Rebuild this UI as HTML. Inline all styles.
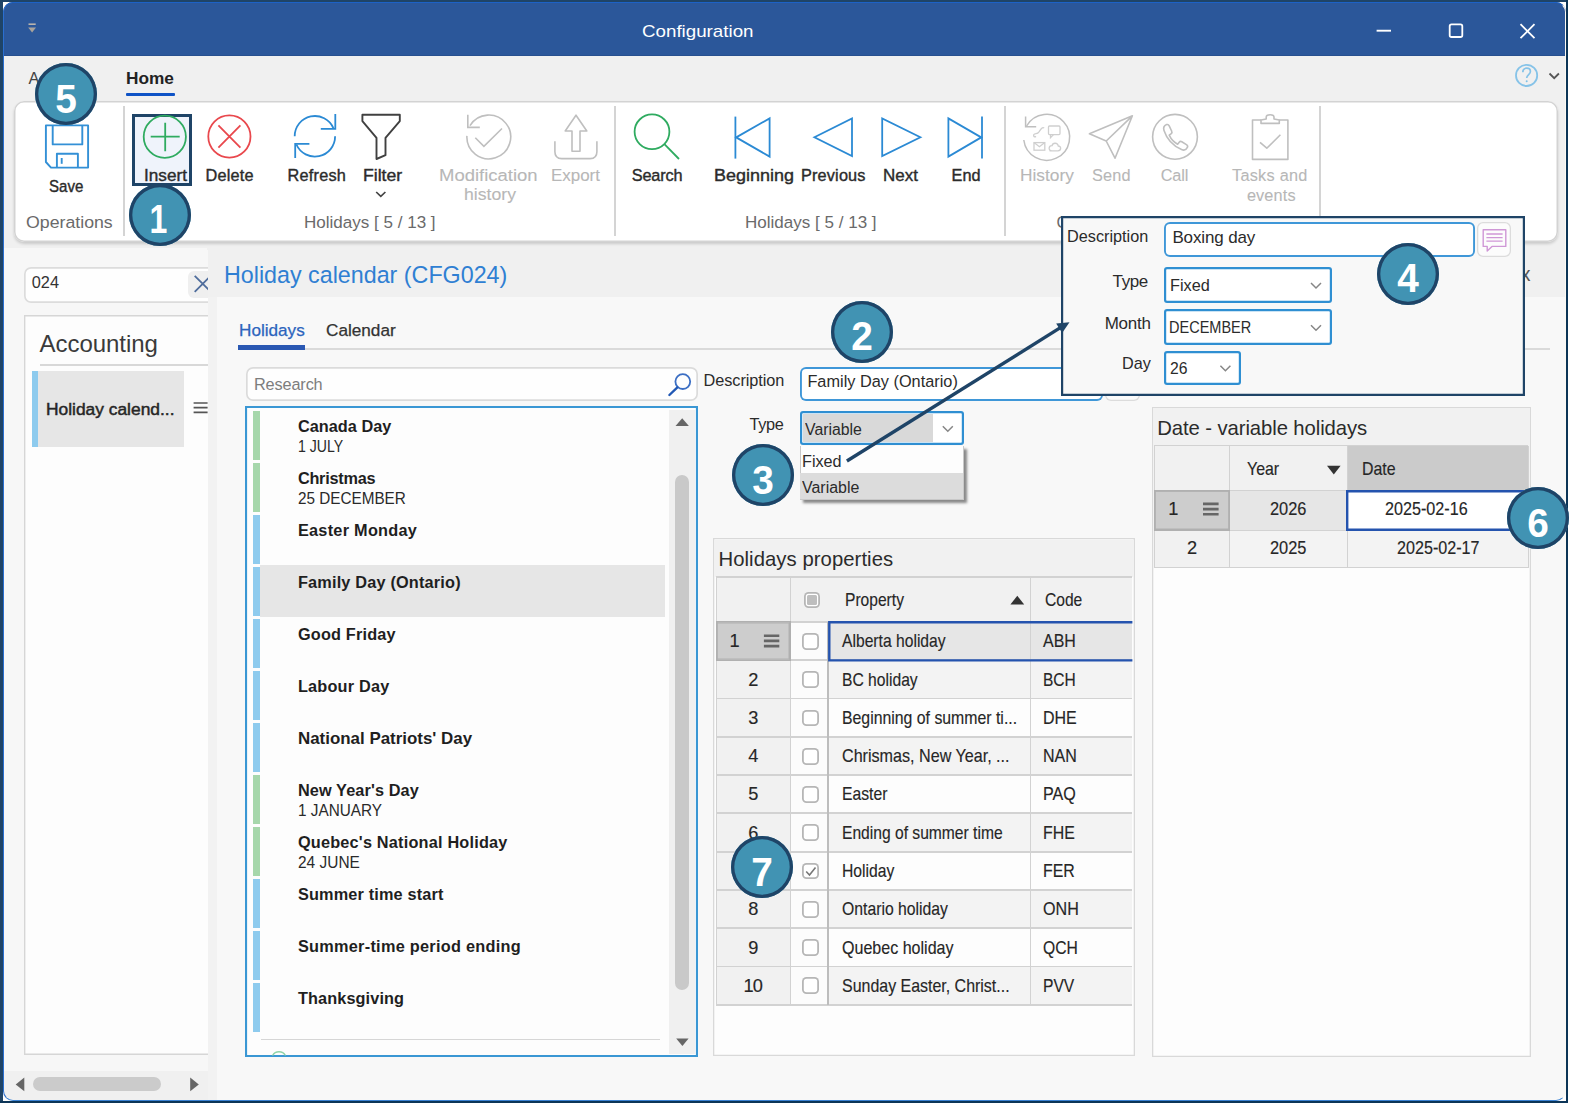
<!DOCTYPE html>
<html lang="en"><head><meta charset="utf-8"><title>Configuration</title>
<style>
html,body{margin:0;padding:0;background:#fff;}
body{width:1570px;height:1104px;overflow:hidden;position:relative;font-family:"Liberation Sans",sans-serif;}
#w{position:absolute;left:0;top:0;width:1570px;height:1104px;overflow:hidden;}
#w div,#w svg,#w span.t{position:absolute;box-sizing:border-box;}
span.t{white-space:nowrap;display:block;transform-origin:0 0;}
.badge{border-radius:50%;background:#4193b3;box-shadow:inset 0 0 0 3.3px #1f4467;}
.badge span{position:absolute;left:0;right:0;top:8.9px;height:55.4px;text-align:center;color:#fff;font-weight:700;font-size:40px;line-height:55.4px;transform:scaleX(0.93);}
</style></head><body><div id="w">
<div style="left:0.00px;top:0.00px;width:1568.30px;height:1103.30px;background:#1f4467;"></div>
<div style="left:1565.80px;top:0.00px;width:2.50px;height:1103.30px;background:#0c3557;"></div>
<div style="left:0.00px;top:1100.80px;width:1568.30px;height:2.50px;background:#0c3557;"></div>
<div style="left:2.80px;top:1.80px;width:1563.00px;height:1099.00px;background:#fff;"></div>
<div style="left:2.80px;top:1.80px;width:1563.00px;height:1099.00px;background:#f7f7f7;border-radius:10px;"></div>
<div style="left:2.80px;top:1.80px;width:1563.00px;height:53.70px;background:#2b579a;border-radius:10px 10px 0 0;"></div>
<div style="left:2.80px;top:54.50px;width:1563.00px;height:1.30px;background:#27508f;"></div>
<div style="left:2.80px;top:55.80px;width:1563.00px;height:194.20px;background:#f0f0f0;"></div>
<span class="t " style="left:642.00px;top:20.51px;font-size:17px;line-height:22px;color:#fff;transform:scaleX(1.1029);">Configuration</span>
<svg style="left:26px;top:20px;" width="12" height="16" viewBox="26 20 12 16" fill="none"><path d="M28.5 24.2h7.2" stroke="#b9b4ae" stroke-width="1.6"/><path d="M28.2 27.6h7.8l-3.9 5z" fill="#a9a39b"/></svg>
<svg style="left:1370px;top:18px;" width="175" height="26" viewBox="1370 18 175 26" fill="none"><path d="M1376.6 30.7h14.4" stroke="#fff" stroke-width="1.9"/><rect x="1449.7" y="24.4" width="12.6" height="12.6" rx="1.8" stroke="#fff" stroke-width="1.8"/><path d="M1520.5 24.2l14 14M1534.5 24.2l-14 14" stroke="#fff" stroke-width="1.8"/></svg>
<svg style="left:1512px;top:62px;" width="52" height="28" viewBox="1512 62 52 28" fill="none"><circle cx="1526.6" cy="75.4" r="10.6" stroke="#86c3e8" stroke-width="1.8"/><path d="M1522.8 72.2c0-2.6 1.6-4 3.9-4 2.2 0 3.7 1.4 3.7 3.3 0 3-3.7 3.2-3.7 6.6" stroke="#86c3e8" stroke-width="1.7"/><circle cx="1526.7" cy="81.3" r="1" fill="#7fc0e6"/><path d="M1549.5 73.5l4.7 4.7 4.7-4.7" stroke="#555" stroke-width="1.8"/></svg>
<span class="t " style="left:28.50px;top:67.85px;font-size:16.3px;line-height:21px;color:#444;">A</span>
<span class="t " style="left:126.00px;top:67.85px;font-size:16.3px;line-height:21px;color:#222;font-weight:700;transform:scaleX(1.0596);">Home</span>
<div style="left:126.00px;top:93.00px;width:49.30px;height:3.20px;background:#0f53c6;border-radius:1px;"></div>
<div style="left:13.50px;top:100.80px;width:1544.00px;height:141.50px;background:#fff;border-radius:10px;box-shadow:inset 0 0 0 1.5px #d3d3d3,0 2px 3px rgba(0,0,0,0.16);"></div>
<div style="left:123.30px;top:105.80px;width:1.40px;height:130.00px;background:#d4d4d4;"></div>
<div style="left:614.30px;top:105.80px;width:1.40px;height:130.00px;background:#d4d4d4;"></div>
<div style="left:1004.30px;top:105.80px;width:1.40px;height:130.00px;background:#d4d4d4;"></div>
<div style="left:1319.30px;top:105.80px;width:1.40px;height:130.00px;background:#d4d4d4;"></div>
<div class="badge" style="left:128.70px;top:183.60px;width:62.00px;height:62.00px;"><span style="transform:translateX(-1.5px) scaleX(0.8);">1</span></div>
<div style="left:132.20px;top:114.20px;width:59.60px;height:72.20px;background:#eff3fb;border:3px solid #1f4467;"></div>
<span class="t " style="left:48.90px;top:175.85px;font-size:16.3px;line-height:21px;color:#2b2b2b;transform:scaleX(0.9247);-webkit-text-stroke:0.38px #2b2b2b;">Save</span>
<span class="t " style="left:143.80px;top:164.85px;font-size:16.3px;line-height:21px;color:#2b2b2b;transform:scaleX(1.0539);-webkit-text-stroke:0.38px #2b2b2b;">Insert</span>
<span class="t " style="left:205.40px;top:164.85px;font-size:16.3px;line-height:21px;color:#2b2b2b;letter-spacing:0.240px;-webkit-text-stroke:0.38px #2b2b2b;">Delete</span>
<span class="t " style="left:287.50px;top:164.85px;font-size:16.3px;line-height:21px;color:#2b2b2b;letter-spacing:0.233px;-webkit-text-stroke:0.38px #2b2b2b;">Refresh</span>
<span class="t " style="left:362.50px;top:164.85px;font-size:16.3px;line-height:21px;color:#2b2b2b;transform:scaleX(1.0829);-webkit-text-stroke:0.38px #2b2b2b;">Filter</span>
<span class="t " style="left:439.30px;top:164.85px;font-size:16.3px;line-height:21px;color:#b7b7b7;transform:scaleX(1.1345);-webkit-text-stroke:0.1px #b7b7b7;">Modification</span>
<span class="t " style="left:463.60px;top:184.35px;font-size:16.3px;line-height:21px;color:#b7b7b7;transform:scaleX(1.0832);-webkit-text-stroke:0.1px #b7b7b7;">history</span>
<span class="t " style="left:550.80px;top:164.85px;font-size:16.3px;line-height:21px;color:#b7b7b7;transform:scaleX(1.0403);-webkit-text-stroke:0.1px #b7b7b7;">Export</span>
<span class="t " style="left:631.70px;top:164.85px;font-size:16.3px;line-height:21px;color:#2b2b2b;letter-spacing:-0.140px;-webkit-text-stroke:0.38px #2b2b2b;">Search</span>
<span class="t " style="left:714.00px;top:164.85px;font-size:16.3px;line-height:21px;color:#2b2b2b;transform:scaleX(1.1034);-webkit-text-stroke:0.38px #2b2b2b;">Beginning</span>
<span class="t " style="left:801.00px;top:164.85px;font-size:16.3px;line-height:21px;color:#2b2b2b;letter-spacing:0.157px;-webkit-text-stroke:0.38px #2b2b2b;">Previous</span>
<span class="t " style="left:883.40px;top:164.85px;font-size:16.3px;line-height:21px;color:#2b2b2b;transform:scaleX(1.0418);-webkit-text-stroke:0.38px #2b2b2b;">Next</span>
<span class="t " style="left:951.40px;top:164.85px;font-size:16.3px;line-height:21px;color:#2b2b2b;letter-spacing:0.150px;-webkit-text-stroke:0.38px #2b2b2b;">End</span>
<span class="t " style="left:1020.00px;top:164.85px;font-size:16.3px;line-height:21px;color:#b7b7b7;transform:scaleX(1.0630);-webkit-text-stroke:0.1px #b7b7b7;">History</span>
<span class="t " style="left:1092.00px;top:164.85px;font-size:16.3px;line-height:21px;color:#b7b7b7;letter-spacing:0.167px;-webkit-text-stroke:0.1px #b7b7b7;">Send</span>
<span class="t " style="left:1160.70px;top:164.85px;font-size:16.3px;line-height:21px;color:#b7b7b7;letter-spacing:-0.133px;-webkit-text-stroke:0.1px #b7b7b7;">Call</span>
<span class="t " style="left:1232.00px;top:164.85px;font-size:16.3px;line-height:21px;color:#b7b7b7;letter-spacing:0.262px;-webkit-text-stroke:0.1px #b7b7b7;">Tasks and</span>
<span class="t " style="left:1246.90px;top:184.55px;font-size:16.3px;line-height:21px;color:#b7b7b7;letter-spacing:0.140px;-webkit-text-stroke:0.1px #b7b7b7;">events</span>
<span class="t " style="left:26.20px;top:212.25px;font-size:16.3px;line-height:21px;color:#6a6a6a;transform:scaleX(1.0891);">Operations</span>
<span class="t " style="left:304.30px;top:212.25px;font-size:16.3px;line-height:21px;color:#6a6a6a;transform:scaleX(1.0461);">Holidays [ 5 / 13 ]</span>
<span class="t " style="left:744.50px;top:212.25px;font-size:16.3px;line-height:21px;color:#6a6a6a;transform:scaleX(1.0461);">Holidays [ 5 / 13 ]</span>
<span class="t " style="left:1056.50px;top:212.25px;font-size:16.3px;line-height:21px;color:#6a6a6a;">C</span>
<svg style="left:14px;top:104px;" width="1320" height="132" viewBox="14 104 1320 132" fill="none"><g stroke="#3390d6" stroke-width="1.9" stroke-linejoin="round"><path d="M45.9 125.4h42.2v42.2H51l-5.1-5.6z"/><path d="M52.7 125.4v19h29.6v-19"/><path d="M56.9 167.6v-13.8h21v13.8"/><path d="M61.7 158v5.8"/></g><g stroke="#2fab60" stroke-width="1.8"><circle cx="164.8" cy="136.7" r="21.1"/><path d="M150.7 136.7h29M165.2 122.8v28.4"/></g><g stroke="#e9484d" stroke-width="1.8"><circle cx="229.4" cy="136.5" r="21.1"/><path d="M218.4 125.3l22 22.4M240.4 125.3l-22 22.4"/></g><g stroke="#2b8ad4" stroke-width="1.8"><path d="M294.7 136.3A20.2 20.2 0 0 1 333.4 128.1"/><path d="M335.3 114.1v14.7h-14.5"/><path d="M335.1 136.3A20.2 20.2 0 0 1 296.4 144.5"/><path d="M295.2 158v-14.100h14.200"/></g><path d="M362.4 114.700h37.400v6.400l-14.300 16.700v17.400l-9 3.800v-21.200l-14.100-16.700z" stroke="#404040" stroke-width="1.9" stroke-linejoin="round"/><g stroke="#bfbfbf" stroke-width="1.6"><path d="M470.0 125.7A21.9 21.9 0 1 1 466.9 135.9"/><path d="M467.800 114.700v12.700h12"/><path d="M475.300 137.700l8.600 8.600 18.100-17.800"/></g><g stroke="#bfbfbf" stroke-width="1.6" stroke-linejoin="round"><path d="M554.9 141.3v10.5c0 4.2 2.6 6.8 6.8 6.8h28.4c4.2 0 6.8-2.6 6.8-6.8v-10.5"/><path d="M576 115.2l10.8 15.8h-6.8v20.2h-8v-20.2h-6.8z"/></g><g stroke="#2fab60" stroke-width="1.8"><circle cx="652" cy="131.8" r="17.4"/><path d="M664.4 144.2l14.6 14.8"/></g><g stroke="#2b8ad4" stroke-width="1.8" stroke-linejoin="miter"><path d="M735.4 116.6v42"/><path d="M736.2 137.4l33.4-19v38.2z"/><path d="M814.4 137.2l37.6-18.8v37.6z"/><path d="M920.4 137.2l-38.2-18.8v37.6z"/><path d="M982 116.6v42"/><path d="M981.2 137.4l-32.8-19v38.2z"/></g><g stroke="#bfbfbf" stroke-width="1.5"><path d="M1026.6 126A23 23 0 1 1 1023.8 140"/><path d="M1025.6 116.4v10.4h10.6"/><g stroke="#cfcfcf" stroke-width="1.3"><rect x="1048.5" y="126" width="11.5" height="8.6" rx="1"/><path d="M1050.5 134.6v3l3-3"/><rect x="1034" y="142.6" width="10.8" height="7.6"/><path d="M1034 142.6l5.4 4.2 5.4-4.2"/><path d="M1049.5 150.8h8.4c3.6 0 3.6-4.8 0.4-4.8-0.6-3.6-5.6-3.6-6.2-0.4-3.6-0.2-4.2 5.2-0.2 5.2z"/><path d="M1036 136.4c-2 1.4-3.4-1.4-1.4-2.4 1.6-0.8 2.6 0.4 4.6-2.4 1.6-2.4 3-5 5-3.6"/></g></g><path d="M1089.4 133.8l43-18-17.4 42.4-8.8-17.2zM1106.2 141l26.2-25.2" stroke="#bfbfbf" stroke-width="1.6" stroke-linejoin="round"/><g stroke="#bfbfbf" stroke-width="1.6"><circle cx="1175" cy="136.8" r="22.4"/><path d="M1166.6 124.6c-2.4 1-3.6 2.8-2.6 5.8 2.6 8 9.4 15.4 17.6 19.2 2.8 1.2 4.6 0.2 5.8-2.2 0.6-1.2 0-2.2-1-2.8l-4.6-2.8c-1-0.6-2-0.4-2.8 0.6l-1.4 1.8c-3.6-1.8-6.600-5.200-8.400-9l1.800-1.400c1-0.800 1.200-1.800 0.600-2.800l-2.400-5.200c-0.500-1-1.400-1.600-2.600-1.200z" stroke-linejoin="round"/></g><g stroke="#bfbfbf" stroke-width="1.6" stroke-linejoin="round"><path d="M1261 120h-8.500v39.400h35.400V120h-8.600"/><path d="M1261 123.400v-3.400l5.200-1v-1.800c0-3.200 7.800-3.200 7.800 0v1.800l5.300 1v3.400z"/><path d="M1260 142.300l6.800 5.900 13.600-13.500"/></g></svg>
<svg style="left:372px;top:188px;" width="18" height="12" viewBox="372 188 18 12" fill="none"><path d="M376.2 192l4.600 4.400 4.600-4.400" stroke="#444" stroke-width="1.7"/></svg>
<div style="left:2.80px;top:248.00px;width:204.70px;height:852.80px;background:#f7f7f7;border-radius:0 0 0 10px;"></div>
<div style="left:207.50px;top:248.00px;width:1358.30px;height:49.40px;background:#f0f0f0;"></div>
<div style="left:207.50px;top:297.40px;width:9.00px;height:803.40px;background:#f2f2f2;"></div>
<div style="left:216.50px;top:297.40px;width:1349.30px;height:803.40px;background:#f8f8f8;border-radius:0 0 10px 0;"></div>
<div style="left:3.5px;top:250px;width:204px;height:850.8px;overflow:hidden;">
<div style="left:20.50px;top:16.80px;width:206.00px;height:35.90px;background:#fefefe;border-radius:7px;box-shadow:inset 0 0 0 1.7px #dcdcdc;"></div>
<div style="left:184.00px;top:20.80px;width:42.50px;height:27.70px;background:#efefef;border-radius:6px 0 0 6px;"></div>
<div style="left:20.50px;top:65.10px;width:206.00px;height:739.70px;background:#fdfdfd;box-shadow:inset 0 0 0 1.4px #d6d6d6;"></div>
<div style="left:36.00px;top:114.40px;width:190.50px;height:1.30px;background:#d8d8d8;"></div>
<div style="left:28.30px;top:120.80px;width:152.20px;height:76.20px;background:#e6e6e6;"></div>
<div style="left:28.30px;top:120.80px;width:5.90px;height:76.20px;background:#8ecbee;"></div>
<div style="left:-0.70px;top:821.00px;width:204.70px;height:29.80px;background:#f0f0f0;border-radius:0 0 0 10px;"></div>
<div style="left:29.50px;top:827.40px;width:128.40px;height:13.60px;background:#cbcbcb;border-radius:7px;"></div>
</div>
<svg style="left:10px;top:1074px;" width="195" height="22" viewBox="10 1074 195 22" fill="none"><path d="M24.300 1077.600v13.600l-8.600-6.800z" fill="#666"/><path d="M190.200 1077.600v13.600l8.600-6.800z" fill="#666"/></svg>
<svg style="left:192px;top:272px;" width="15.5" height="24" viewBox="192 272 15.5 24" fill="none"><path d="M194.700 275.800l16 16M210.700 275.800l-16 16" stroke="#4f6d9c" stroke-width="1.8"/></svg>
<svg style="left:192px;top:398px;" width="16" height="20" viewBox="192 398 16 20" fill="none"><path d="M193.600 403h14M193.600 407.700h14M193.600 412.400h14" stroke="#555" stroke-width="1.700"/></svg>
<span class="t " style="left:31.80px;top:271.85px;font-size:16.3px;line-height:21px;color:#333;">024</span>
<span class="t " style="left:39.50px;top:328.38px;font-size:24px;line-height:31px;color:#3a3a3a;letter-spacing:-0.033px;">Accounting</span>
<span class="t " style="left:45.90px;top:399.25px;font-size:16.3px;line-height:21px;color:#262626;transform:scaleX(1.0672);-webkit-text-stroke:0.45px #262626;">Holiday calend...</span>
<span class="t " style="left:223.70px;top:258.71px;font-size:24.5px;line-height:32px;color:#2f7fd3;transform:scaleX(0.9500);">Holiday calendar (CFG024)</span>
<span class="t " style="left:1520.50px;top:260.57px;font-size:20px;line-height:26px;color:#555;">x</span>
<span class="t " style="left:238.70px;top:319.95px;font-size:16.3px;line-height:21px;color:#2c64bd;transform:scaleX(1.0528);-webkit-text-stroke:0.25px #2c64bd;">Holidays</span>
<span class="t " style="left:325.60px;top:319.95px;font-size:16.3px;line-height:21px;color:#333;transform:scaleX(1.0544);-webkit-text-stroke:0.25px #333;">Calendar</span>
<div style="left:238.00px;top:348.20px;width:1311.50px;height:1.80px;background:#dadada;"></div>
<div style="left:238.00px;top:345.00px;width:67.20px;height:4.80px;background:#2a58b3;"></div>
<div style="left:246.00px;top:366.60px;width:452.00px;height:34.70px;background:#fefefe;border-radius:7px;box-shadow:inset 0 0 0 1.7px #dbdbdb;"></div>
<span class="t " style="left:254.00px;top:374.25px;font-size:16.3px;line-height:21px;color:#7d7d7d;letter-spacing:-0.143px;">Research</span>
<svg style="left:666px;top:371px;" width="28" height="28" viewBox="666 371 28 28" fill="none"><circle cx="682.800" cy="381.600" r="7.400" stroke="#3c6fc4" stroke-width="1.800"/><path d="M677.400 387.400l-8 7.600" stroke="#2158b4" stroke-width="2.400" stroke-linecap="round"/></svg>
<div style="left:245.30px;top:405.90px;width:453.10px;height:651.50px;background:#fdfdfd;overflow:hidden;box-shadow:inset 0 0 0 2.1px #3a97d4;"></div>
<div style="left:669.30px;top:409.80px;width:25.50px;height:644.00px;background:#f0f0f0;"></div>
<div style="left:675.40px;top:475.00px;width:13.80px;height:515.00px;background:#c9c9c9;border-radius:7px;"></div>
<svg style="left:672px;top:414px;" width="22" height="640" viewBox="672 414 22 640" fill="none"><path d="M675.500 426.100h13.400l-6.700-7.800z" fill="#666"/><path d="M676.200 1038.400h12.400l-6.200 7.600z" fill="#666"/></svg>
<div style="left:253.30px;top:411.00px;width:6.30px;height:48.80px;background:#a6d7ab;"></div>
<span class="t " style="left:297.90px;top:415.85px;font-size:16.3px;line-height:21px;color:#1f1f1f;font-weight:700;letter-spacing:0.033px;">Canada Day</span>
<span class="t " style="left:297.90px;top:436.05px;font-size:16.3px;line-height:21px;color:#2a2a2a;transform:scaleX(0.8640);">1 JULY</span>
<div style="left:253.30px;top:463.00px;width:6.30px;height:48.80px;background:#a6d7ab;"></div>
<span class="t " style="left:297.90px;top:467.85px;font-size:16.3px;line-height:21px;color:#1f1f1f;font-weight:700;letter-spacing:-0.250px;">Christmas</span>
<span class="t " style="left:297.90px;top:488.05px;font-size:16.3px;line-height:21px;color:#2a2a2a;transform:scaleX(0.9383);">25 DECEMBER</span>
<div style="left:253.30px;top:515.00px;width:6.30px;height:48.80px;background:#8ecbee;"></div>
<span class="t " style="left:297.90px;top:519.85px;font-size:16.3px;line-height:21px;color:#1f1f1f;font-weight:700;letter-spacing:0.267px;">Easter Monday</span>
<div style="left:259.50px;top:565.40px;width:405.20px;height:51.60px;background:#e6e6e6;"></div>
<div style="left:253.30px;top:567.00px;width:6.30px;height:48.80px;background:#8ecbee;"></div>
<span class="t " style="left:297.90px;top:571.85px;font-size:16.3px;line-height:21px;color:#1f1f1f;font-weight:700;letter-spacing:0.184px;">Family Day (Ontario)</span>
<div style="left:253.30px;top:619.00px;width:6.30px;height:48.80px;background:#8ecbee;"></div>
<span class="t " style="left:297.90px;top:623.85px;font-size:16.3px;line-height:21px;color:#1f1f1f;font-weight:700;letter-spacing:0.190px;">Good Friday</span>
<div style="left:253.30px;top:671.00px;width:6.30px;height:48.80px;background:#8ecbee;"></div>
<span class="t " style="left:297.90px;top:675.85px;font-size:16.3px;line-height:21px;color:#1f1f1f;font-weight:700;letter-spacing:0.200px;">Labour Day</span>
<div style="left:253.30px;top:723.00px;width:6.30px;height:48.80px;background:#8ecbee;"></div>
<span class="t " style="left:297.90px;top:727.85px;font-size:16.3px;line-height:21px;color:#1f1f1f;font-weight:700;transform:scaleX(1.0387);">National Patriots&#x27; Day</span>
<div style="left:253.30px;top:775.00px;width:6.30px;height:48.80px;background:#a6d7ab;"></div>
<span class="t " style="left:297.90px;top:779.85px;font-size:16.3px;line-height:21px;color:#1f1f1f;font-weight:700;letter-spacing:0.115px;">New Year&#x27;s Day</span>
<span class="t " style="left:297.90px;top:800.05px;font-size:16.3px;line-height:21px;color:#2a2a2a;transform:scaleX(0.9407);">1 JANUARY</span>
<div style="left:253.30px;top:827.00px;width:6.30px;height:48.80px;background:#a6d7ab;"></div>
<span class="t " style="left:297.90px;top:831.85px;font-size:16.3px;line-height:21px;color:#1f1f1f;font-weight:700;letter-spacing:0.200px;">Quebec&#x27;s National Holiday</span>
<span class="t " style="left:297.90px;top:852.05px;font-size:16.3px;line-height:21px;color:#2a2a2a;transform:scaleX(0.9494);">24 JUNE</span>
<div style="left:253.30px;top:879.00px;width:6.30px;height:48.80px;background:#8ecbee;"></div>
<span class="t " style="left:297.90px;top:883.85px;font-size:16.3px;line-height:21px;color:#1f1f1f;font-weight:700;letter-spacing:0.163px;">Summer time start</span>
<div style="left:253.30px;top:931.00px;width:6.30px;height:48.80px;background:#8ecbee;"></div>
<span class="t " style="left:297.90px;top:935.85px;font-size:16.3px;line-height:21px;color:#1f1f1f;font-weight:700;letter-spacing:0.275px;">Summer-time period ending</span>
<div style="left:253.30px;top:983.00px;width:6.30px;height:48.80px;background:#8ecbee;"></div>
<span class="t " style="left:297.90px;top:987.85px;font-size:16.3px;line-height:21px;color:#1f1f1f;font-weight:700;letter-spacing:0.109px;">Thanksgiving</span>
<div style="left:261.00px;top:1038.60px;width:399.00px;height:1.20px;background:#d6d6d6;"></div>
<svg style="left:270px;top:1046px;" width="20" height="10" viewBox="270 1046 20 10" fill="none"><path d="M272.500 1055.500a7.500 7.500 0 0 1 13 0" stroke="#8fd3a8" stroke-width="1.300"/></svg>
<span class="t " style="left:703.60px;top:369.85px;font-size:16.3px;line-height:21px;color:#2b2b2b;letter-spacing:-0.070px;">Description</span>
<div style="left:799.60px;top:366.50px;width:303.80px;height:34.40px;background:#fff;border-radius:6px;box-shadow:inset 0 0 0 1.9px #3f97d8;"></div>
<span class="t " style="left:807.40px;top:371.25px;font-size:16.3px;line-height:21px;color:#2b2b2b;letter-spacing:0.016px;">Family Day (Ontario)</span>
<div style="left:1105.40px;top:366.50px;width:34.60px;height:34.40px;background:#fbfbfb;border-radius:6px;box-shadow:inset 0 0 0 1.3px #dcdcdc;"></div>
<span class="t " style="left:749.50px;top:414.45px;font-size:16.3px;line-height:21px;color:#2b2b2b;letter-spacing:-0.300px;">Type</span>
<div style="left:799.60px;top:411.20px;width:164.20px;height:34.10px;background:#fff;border-radius:3px;box-shadow:inset 0 0 0 2.2px #2f8fd2;"></div>
<div style="left:802.60px;top:414.20px;width:130.90px;height:28.10px;background:#d9d9d9;"></div>
<span class="t " style="left:804.80px;top:417.71px;font-size:17.3px;line-height:22px;color:#2b2b2b;transform:scaleX(0.9164);">Variable</span>
<svg style="left:940px;top:422px;" width="16" height="12" viewBox="940 422 16 12" fill="none"><path d="M942.800 426.200l5 5 5-5" stroke="#868686" stroke-width="1.500"/></svg>
<div style="left:799.60px;top:446.20px;width:164.20px;height:53.80px;background:#fdfdfd;border:1px solid #c8c8c8;border-top:none;box-shadow:3px 3px 2.5px rgba(0,0,0,0.45);"></div>
<div style="left:800.40px;top:473.40px;width:162.60px;height:26.00px;background:#dcdcdc;"></div>
<span class="t " style="left:801.60px;top:449.81px;font-size:17.3px;line-height:22px;color:#2b2b2b;transform:scaleX(0.9362);">Fixed</span>
<span class="t " style="left:801.60px;top:475.61px;font-size:17.3px;line-height:22px;color:#2b2b2b;transform:scaleX(0.9228);">Variable</span>
<div style="left:712.80px;top:538.40px;width:422.40px;height:518.00px;background:#fdfdfd;box-shadow:inset 0 0 0 1.3px #d9d9d9;"></div>
<div style="left:714.10px;top:539.70px;width:419.80px;height:37.30px;background:#f1f1f1;"></div>
<span class="t " style="left:718.50px;top:546.37px;font-size:20.3px;line-height:26px;color:#2b2b2b;letter-spacing:0.056px;">Holidays properties</span>
<div style="left:716.20px;top:577.00px;width:416.20px;height:44.60px;background:#f1f1f1;"></div>
<div style="left:716.20px;top:622.00px;width:74.30px;height:38.27px;background:#cdcdcd;box-shadow:inset 0 0 0 1.5px #b2b2b2;"></div>
<div style="left:790.50px;top:622.00px;width:37.80px;height:38.27px;background:#fcfcfc;"></div>
<div style="left:828.30px;top:622.00px;width:304.10px;height:38.27px;background:#e6e6e6;"></div>
<span class="t " style="left:729.45px;top:629.39px;font-size:18.2px;line-height:24px;color:#262626;-webkit-text-stroke:0.15px #262626;">1</span>
<span class="t " style="left:842.30px;top:629.39px;font-size:18.2px;line-height:24px;color:#262626;transform:scaleX(0.8613);-webkit-text-stroke:0.15px #262626;">Alberta holiday</span>
<span class="t " style="left:1042.70px;top:629.39px;font-size:18.2px;line-height:24px;color:#262626;transform:scaleX(0.8770);-webkit-text-stroke:0.15px #262626;">ABH</span>
<div style="left:802.30px;top:633.03px;width:16.80px;height:16.80px;background:#fff;border-radius:4.5px;box-shadow:inset 0 0 0 1.8px #b6b6b6;"></div>
<div style="left:716.20px;top:660.27px;width:74.30px;height:38.27px;background:#f1f1f1;"></div>
<div style="left:790.50px;top:660.27px;width:37.80px;height:38.27px;background:#fcfcfc;"></div>
<div style="left:828.30px;top:660.27px;width:304.10px;height:38.27px;background:#f3f3f3;"></div>
<span class="t " style="left:748.15px;top:667.66px;font-size:18.2px;line-height:24px;color:#262626;-webkit-text-stroke:0.15px #262626;">2</span>
<span class="t " style="left:842.30px;top:667.66px;font-size:18.2px;line-height:24px;color:#262626;transform:scaleX(0.8602);-webkit-text-stroke:0.15px #262626;">BC holiday</span>
<span class="t " style="left:1042.70px;top:667.66px;font-size:18.2px;line-height:24px;color:#262626;transform:scaleX(0.8542);-webkit-text-stroke:0.15px #262626;">BCH</span>
<div style="left:802.30px;top:671.30px;width:16.80px;height:16.80px;background:#fff;border-radius:4.5px;box-shadow:inset 0 0 0 1.8px #b6b6b6;"></div>
<div style="left:716.20px;top:698.54px;width:74.30px;height:38.27px;background:#f1f1f1;"></div>
<div style="left:790.50px;top:698.54px;width:37.80px;height:38.27px;background:#fcfcfc;"></div>
<div style="left:828.30px;top:698.54px;width:304.10px;height:38.27px;background:#fdfdfd;"></div>
<span class="t " style="left:748.15px;top:705.93px;font-size:18.2px;line-height:24px;color:#262626;-webkit-text-stroke:0.15px #262626;">3</span>
<span class="t " style="left:842.30px;top:705.93px;font-size:18.2px;line-height:24px;color:#262626;transform:scaleX(0.8703);-webkit-text-stroke:0.15px #262626;">Beginning of summer ti...</span>
<span class="t " style="left:1042.70px;top:705.93px;font-size:18.2px;line-height:24px;color:#262626;transform:scaleX(0.8802);-webkit-text-stroke:0.15px #262626;">DHE</span>
<div style="left:802.30px;top:709.57px;width:16.80px;height:16.80px;background:#fff;border-radius:4.5px;box-shadow:inset 0 0 0 1.8px #b6b6b6;"></div>
<div style="left:716.20px;top:736.81px;width:74.30px;height:38.27px;background:#f1f1f1;"></div>
<div style="left:790.50px;top:736.81px;width:37.80px;height:38.27px;background:#fcfcfc;"></div>
<div style="left:828.30px;top:736.81px;width:304.10px;height:38.27px;background:#f3f3f3;"></div>
<span class="t " style="left:748.15px;top:744.20px;font-size:18.2px;line-height:24px;color:#262626;-webkit-text-stroke:0.15px #262626;">4</span>
<span class="t " style="left:842.30px;top:744.20px;font-size:18.2px;line-height:24px;color:#262626;transform:scaleX(0.8864);-webkit-text-stroke:0.15px #262626;">Chrismas, New Year, ...</span>
<span class="t " style="left:1042.70px;top:744.20px;font-size:18.2px;line-height:24px;color:#262626;transform:scaleX(0.8802);-webkit-text-stroke:0.15px #262626;">NAN</span>
<div style="left:802.30px;top:747.84px;width:16.80px;height:16.80px;background:#fff;border-radius:4.5px;box-shadow:inset 0 0 0 1.8px #b6b6b6;"></div>
<div style="left:716.20px;top:775.08px;width:74.30px;height:38.27px;background:#f1f1f1;"></div>
<div style="left:790.50px;top:775.08px;width:37.80px;height:38.27px;background:#fcfcfc;"></div>
<div style="left:828.30px;top:775.08px;width:304.10px;height:38.27px;background:#fdfdfd;"></div>
<span class="t " style="left:748.15px;top:782.47px;font-size:18.2px;line-height:24px;color:#262626;-webkit-text-stroke:0.15px #262626;">5</span>
<span class="t " style="left:842.30px;top:782.47px;font-size:18.2px;line-height:24px;color:#262626;transform:scaleX(0.8631);-webkit-text-stroke:0.15px #262626;">Easter</span>
<span class="t " style="left:1042.70px;top:782.47px;font-size:18.2px;line-height:24px;color:#262626;transform:scaleX(0.8841);-webkit-text-stroke:0.15px #262626;">PAQ</span>
<div style="left:802.30px;top:786.12px;width:16.80px;height:16.80px;background:#fff;border-radius:4.5px;box-shadow:inset 0 0 0 1.8px #b6b6b6;"></div>
<div style="left:716.20px;top:813.35px;width:74.30px;height:38.27px;background:#f1f1f1;"></div>
<div style="left:790.50px;top:813.35px;width:37.80px;height:38.27px;background:#fcfcfc;"></div>
<div style="left:828.30px;top:813.35px;width:304.10px;height:38.27px;background:#f3f3f3;"></div>
<span class="t " style="left:748.15px;top:820.74px;font-size:18.2px;line-height:24px;color:#262626;-webkit-text-stroke:0.15px #262626;">6</span>
<span class="t " style="left:842.30px;top:820.74px;font-size:18.2px;line-height:24px;color:#262626;transform:scaleX(0.8589);-webkit-text-stroke:0.15px #262626;">Ending of summer time</span>
<span class="t " style="left:1042.70px;top:820.74px;font-size:18.2px;line-height:24px;color:#262626;transform:scaleX(0.8736);-webkit-text-stroke:0.15px #262626;">FHE</span>
<div style="left:802.30px;top:824.38px;width:16.80px;height:16.80px;background:#fff;border-radius:4.5px;box-shadow:inset 0 0 0 1.8px #b6b6b6;"></div>
<div style="left:716.20px;top:851.62px;width:74.30px;height:38.27px;background:#f1f1f1;"></div>
<div style="left:790.50px;top:851.62px;width:37.80px;height:38.27px;background:#fcfcfc;"></div>
<div style="left:828.30px;top:851.62px;width:304.10px;height:38.27px;background:#fdfdfd;"></div>
<span class="t " style="left:842.30px;top:859.01px;font-size:18.2px;line-height:24px;color:#262626;transform:scaleX(0.8633);-webkit-text-stroke:0.15px #262626;">Holiday</span>
<span class="t " style="left:1042.70px;top:859.01px;font-size:18.2px;line-height:24px;color:#262626;transform:scaleX(0.8736);-webkit-text-stroke:0.15px #262626;">FER</span>
<div style="left:802.30px;top:862.65px;width:16.80px;height:16.80px;background:#fff;border-radius:4.5px;box-shadow:inset 0 0 0 1.8px #b6b6b6;"></div>
<svg style="left:803px;top:863px;" width="16" height="16" viewBox="803 863 16 16" fill="none"><path d="M806.2 871.5l3.300 3.600 6-7.600" stroke="#777" stroke-width="1.600"/></svg>
<div style="left:716.20px;top:889.89px;width:74.30px;height:38.27px;background:#f1f1f1;"></div>
<div style="left:790.50px;top:889.89px;width:37.80px;height:38.27px;background:#fcfcfc;"></div>
<div style="left:828.30px;top:889.89px;width:304.10px;height:38.27px;background:#f3f3f3;"></div>
<span class="t " style="left:748.15px;top:897.28px;font-size:18.2px;line-height:24px;color:#262626;-webkit-text-stroke:0.15px #262626;">8</span>
<span class="t " style="left:842.30px;top:897.28px;font-size:18.2px;line-height:24px;color:#262626;transform:scaleX(0.8660);-webkit-text-stroke:0.15px #262626;">Ontario holiday</span>
<span class="t " style="left:1042.70px;top:897.28px;font-size:18.2px;line-height:24px;color:#262626;transform:scaleX(0.8861);-webkit-text-stroke:0.15px #262626;">ONH</span>
<div style="left:802.30px;top:900.93px;width:16.80px;height:16.80px;background:#fff;border-radius:4.5px;box-shadow:inset 0 0 0 1.8px #b6b6b6;"></div>
<div style="left:716.20px;top:928.16px;width:74.30px;height:38.27px;background:#f1f1f1;"></div>
<div style="left:790.50px;top:928.16px;width:37.80px;height:38.27px;background:#fcfcfc;"></div>
<div style="left:828.30px;top:928.16px;width:304.10px;height:38.27px;background:#fdfdfd;"></div>
<span class="t " style="left:748.15px;top:935.55px;font-size:18.2px;line-height:24px;color:#262626;-webkit-text-stroke:0.15px #262626;">9</span>
<span class="t " style="left:842.30px;top:935.55px;font-size:18.2px;line-height:24px;color:#262626;transform:scaleX(0.8822);-webkit-text-stroke:0.15px #262626;">Quebec holiday</span>
<span class="t " style="left:1042.70px;top:935.55px;font-size:18.2px;line-height:24px;color:#262626;transform:scaleX(0.8614);-webkit-text-stroke:0.15px #262626;">QCH</span>
<div style="left:802.30px;top:939.20px;width:16.80px;height:16.80px;background:#fff;border-radius:4.5px;box-shadow:inset 0 0 0 1.8px #b6b6b6;"></div>
<div style="left:716.20px;top:966.43px;width:74.30px;height:38.27px;background:#f1f1f1;"></div>
<div style="left:790.50px;top:966.43px;width:37.80px;height:38.27px;background:#fcfcfc;"></div>
<div style="left:828.30px;top:966.43px;width:304.10px;height:38.27px;background:#f3f3f3;"></div>
<span class="t " style="left:743.50px;top:973.82px;font-size:18.2px;line-height:24px;color:#262626;letter-spacing:-0.800px;-webkit-text-stroke:0.15px #262626;">10</span>
<span class="t " style="left:842.30px;top:973.82px;font-size:18.2px;line-height:24px;color:#262626;transform:scaleX(0.8771);-webkit-text-stroke:0.15px #262626;">Sunday Easter, Christ...</span>
<span class="t " style="left:1042.70px;top:973.82px;font-size:18.2px;line-height:24px;color:#262626;transform:scaleX(0.8599);-webkit-text-stroke:0.15px #262626;">PVV</span>
<div style="left:802.30px;top:977.47px;width:16.80px;height:16.80px;background:#fff;border-radius:4.5px;box-shadow:inset 0 0 0 1.8px #b6b6b6;"></div>
<div style="left:716.20px;top:621.10px;width:416.20px;height:1.80px;background:#d2d2d2;"></div>
<div style="left:716.20px;top:659.37px;width:416.20px;height:1.80px;background:#d2d2d2;"></div>
<div style="left:716.20px;top:697.64px;width:416.20px;height:1.80px;background:#d2d2d2;"></div>
<div style="left:716.20px;top:735.91px;width:416.20px;height:1.80px;background:#d2d2d2;"></div>
<div style="left:716.20px;top:774.18px;width:416.20px;height:1.80px;background:#d2d2d2;"></div>
<div style="left:716.20px;top:812.45px;width:416.20px;height:1.80px;background:#d2d2d2;"></div>
<div style="left:716.20px;top:850.72px;width:416.20px;height:1.80px;background:#d2d2d2;"></div>
<div style="left:716.20px;top:888.99px;width:416.20px;height:1.80px;background:#d2d2d2;"></div>
<div style="left:716.20px;top:927.26px;width:416.20px;height:1.80px;background:#d2d2d2;"></div>
<div style="left:716.20px;top:965.53px;width:416.20px;height:1.80px;background:#d2d2d2;"></div>
<div style="left:716.20px;top:1003.80px;width:416.20px;height:1.80px;background:#d2d2d2;"></div>
<div style="left:715.50px;top:577.00px;width:1.40px;height:427.70px;background:#d2d2d2;"></div>
<div style="left:789.80px;top:577.00px;width:1.40px;height:427.70px;background:#d2d2d2;"></div>
<div style="left:827.30px;top:622.00px;width:2.00px;height:382.70px;background:#bdbdbd;"></div>
<div style="left:1030.00px;top:577.00px;width:1.40px;height:427.70px;background:#d2d2d2;"></div>
<div style="left:716.20px;top:576.30px;width:416.20px;height:1.40px;background:#d2d2d2;"></div>
<div style="left:715.60px;top:621.10px;width:75.50px;height:40.07px;box-shadow:inset 0 0 0 1.7px #b0b0b0;"></div>
<div style="left:803.70px;top:591.70px;width:16.40px;height:16.40px;background:#fff;border-radius:4.5px;box-shadow:inset 0 0 0 1.8px #b6b6b6;"></div>
<div style="left:806.60px;top:594.60px;width:10.60px;height:10.60px;background:#bebebe;border-radius:1.500px;"></div>
<span class="t " style="left:845.00px;top:587.89px;font-size:18.2px;line-height:24px;color:#262626;transform:scaleX(0.8576);-webkit-text-stroke:0.15px #262626;">Property</span>
<span class="t " style="left:1044.70px;top:587.89px;font-size:18.2px;line-height:24px;color:#262626;transform:scaleX(0.8575);-webkit-text-stroke:0.15px #262626;">Code</span>
<svg style="left:1008px;top:592px;" width="20" height="16" viewBox="1008 592 20 16" fill="none"><path d="M1010.400 604.400h13.800l-6.900-8.600z" fill="#333"/></svg>
<svg style="left:760px;top:630px;" width="24" height="22" viewBox="760 630 24 22" fill="none"><path d="M763.900 635.700h15.400M763.900 640.900h15.400M763.900 646.100h15.400" stroke="#666" stroke-width="2.600"/></svg>
<svg style="left:826px;top:618px;" width="308" height="46" viewBox="826 618 308 46" fill="none"><path d="M1132.400 622.200H829.300V660.400H1132.400" stroke="#2453ae" stroke-width="2.400"/></svg>
<div style="left:1151.50px;top:406.50px;width:379.60px;height:650.00px;background:#fdfdfd;box-shadow:inset 0 0 0 1.3px #d9d9d9;"></div>
<div style="left:1152.80px;top:407.80px;width:377.00px;height:37.90px;background:#f1f1f1;"></div>
<span class="t " style="left:1157.30px;top:415.47px;font-size:20.3px;line-height:26px;color:#2b2b2b;letter-spacing:-0.091px;">Date - variable holidays</span>
<div style="left:1154.20px;top:445.70px;width:193.40px;height:44.70px;background:#f1f1f1;"></div>
<div style="left:1347.60px;top:445.70px;width:180.80px;height:44.70px;background:#cbcbcb;"></div>
<div style="left:1154.20px;top:490.40px;width:75.40px;height:39.80px;background:#cdcdcd;box-shadow:inset 0 0 0 1.5px #b2b2b2;"></div>
<div style="left:1229.60px;top:490.40px;width:118.00px;height:39.80px;background:#e6e6e6;"></div>
<div style="left:1154.20px;top:530.20px;width:75.40px;height:37.40px;background:#f1f1f1;"></div>
<div style="left:1229.60px;top:530.20px;width:298.80px;height:37.40px;background:#f3f3f3;"></div>
<div style="left:1154.20px;top:445.00px;width:374.20px;height:1.40px;background:#d2d2d2;"></div>
<div style="left:1154.20px;top:489.70px;width:374.20px;height:1.40px;background:#d2d2d2;"></div>
<div style="left:1154.20px;top:529.50px;width:374.20px;height:1.40px;background:#d2d2d2;"></div>
<div style="left:1154.20px;top:566.90px;width:374.20px;height:1.40px;background:#d2d2d2;"></div>
<div style="left:1153.50px;top:445.70px;width:1.40px;height:121.90px;background:#d2d2d2;"></div>
<div style="left:1228.90px;top:445.70px;width:1.40px;height:121.90px;background:#d2d2d2;"></div>
<div style="left:1346.90px;top:445.70px;width:1.40px;height:121.90px;background:#d2d2d2;"></div>
<div style="left:1527.70px;top:445.70px;width:1.40px;height:121.90px;background:#d2d2d2;"></div>
<div style="left:1153.60px;top:489.60px;width:76.60px;height:41.40px;box-shadow:inset 0 0 0 1.7px #b0b0b0;"></div>
<div style="left:1346.00px;top:490.00px;width:183.00px;height:41.20px;background:#fff;box-shadow:inset 0 0 0 2.4px #2453ae;"></div>
<span class="t " style="left:1246.80px;top:456.69px;font-size:18.2px;line-height:24px;color:#262626;transform:scaleX(0.8750);-webkit-text-stroke:0.15px #262626;">Year</span>
<span class="t " style="left:1362.40px;top:456.69px;font-size:18.2px;line-height:24px;color:#262626;transform:scaleX(0.8750);-webkit-text-stroke:0.15px #262626;">Date</span>
<svg style="left:1324px;top:462px;" width="20" height="16" viewBox="1324 462 20 16" fill="none"><path d="M1327 465.800h13.600l-6.800 8.600z" fill="#333"/></svg>
<span class="t " style="left:1168.35px;top:497.19px;font-size:18.2px;line-height:24px;color:#262626;-webkit-text-stroke:0.15px #262626;">1</span>
<svg style="left:1200px;top:498px;" width="24" height="22" viewBox="1200 498 24 22" fill="none"><path d="M1203 503.900h15.600M1203 509.100h15.600M1203 514.300h15.600" stroke="#666" stroke-width="2.600"/></svg>
<span class="t " style="left:1270.00px;top:497.19px;font-size:18.2px;line-height:24px;color:#262626;transform:scaleX(0.9012);-webkit-text-stroke:0.15px #262626;">2026</span>
<span class="t " style="left:1384.60px;top:497.19px;font-size:18.2px;line-height:24px;color:#262626;transform:scaleX(0.8883);-webkit-text-stroke:0.15px #262626;">2025-02-16</span>
<span class="t " style="left:1186.95px;top:535.59px;font-size:18.2px;line-height:24px;color:#262626;-webkit-text-stroke:0.15px #262626;">2</span>
<span class="t " style="left:1270.00px;top:535.59px;font-size:18.2px;line-height:24px;color:#262626;transform:scaleX(0.9012);-webkit-text-stroke:0.15px #262626;">2025</span>
<span class="t " style="left:1397.00px;top:535.59px;font-size:18.2px;line-height:24px;color:#262626;transform:scaleX(0.8872);-webkit-text-stroke:0.15px #262626;">2025-02-17</span>
<div style="left:1061.00px;top:216.30px;width:463.90px;height:179.40px;background:#f8f8f8;box-shadow:inset 0 0 0 2.2px #1f4467;"></div>
<span class="t " style="left:1067.10px;top:226.11px;font-size:17px;line-height:22px;color:#2b2b2b;transform:scaleX(0.9553);">Description</span>
<div style="left:1163.60px;top:222.20px;width:311.00px;height:35.10px;background:#fff;border-radius:6px;box-shadow:inset 0 0 0 1.9px #3f97d8;"></div>
<span class="t " style="left:1172.40px;top:226.51px;font-size:17px;line-height:22px;color:#2b2b2b;letter-spacing:-0.133px;">Boxing day</span>
<div style="left:1477.30px;top:222.20px;width:34.10px;height:35.10px;background:#fcfcfc;border-radius:6px;box-shadow:inset 0 0 0 1.3px #dcdcdc;"></div>
<svg style="left:1480px;top:226px;" width="30" height="28" viewBox="1480 226 30 28" fill="none"><path d="M1483.200 229.800h22.600v16.600h-13.800l-4.800 4.600v-4.600h-4z" stroke="#cf97d6" stroke-width="1.400" stroke-linejoin="round"/><path d="M1486.400 234h16.200M1486.400 237.600h16.200M1486.400 241.200h16.200" stroke="#cf97d6" stroke-width="1.300"/></svg>
<span class="t " style="left:1112.60px;top:271.31px;font-size:17px;line-height:22px;color:#2b2b2b;letter-spacing:-0.400px;">Type</span>
<div style="left:1163.60px;top:267.30px;width:168.90px;height:35.40px;background:#fff;border-radius:3px;box-shadow:inset 0 0 0 2.2px #2f8fd2;"></div>
<span class="t " style="left:1169.70px;top:274.61px;font-size:17px;line-height:22px;color:#2b2b2b;transform:scaleX(0.9567);">Fixed</span>
<span class="t " style="left:1104.70px;top:313.01px;font-size:17px;line-height:22px;color:#2b2b2b;letter-spacing:-0.225px;">Month</span>
<div style="left:1163.60px;top:309.30px;width:168.90px;height:35.50px;background:#fff;border-radius:3px;box-shadow:inset 0 0 0 2.2px #2f8fd2;"></div>
<span class="t " style="left:1169.20px;top:317.31px;font-size:17px;line-height:22px;color:#2b2b2b;transform:scaleX(0.8536);">DECEMBER</span>
<span class="t " style="left:1122.20px;top:353.11px;font-size:17px;line-height:22px;color:#2b2b2b;transform:scaleX(0.9536);">Day</span>
<div style="left:1163.60px;top:350.70px;width:77.90px;height:34.80px;background:#fff;border-radius:3px;box-shadow:inset 0 0 0 2.2px #2f8fd2;"></div>
<span class="t " style="left:1170.00px;top:357.71px;font-size:17px;line-height:22px;color:#2b2b2b;transform:scaleX(0.9259);">26</span>
<svg style="left:1160px;top:270px;" width="180" height="112" viewBox="1160 270 180 112" fill="none"><path d="M1311 283l5 5 5-5M1311 325.200l5 5 5-5M1220.400 365.800l5 5 5-5" stroke="#868686" stroke-width="1.500"/></svg>
<svg style="left:840px;top:315px;" width="235" height="152" viewBox="840 315 235 152" fill="none"><path d="M846.900 461L1060 327.900" stroke="#1f4467" stroke-width="3.400"/><path d="M1069.500 322.300l-13.300 1.300 5.900 9.500z" fill="#1f4467"/></svg>
<div style="left:2.80px;top:1.80px;width:1563.00px;height:1099.00px;border:1px solid #2a6fd0;border-color:#1d62c6 #fbf9f3 #3a82d4 #2a6fd0;border-radius:10px;"></div>
<div class="badge" style="left:34.60px;top:63.30px;width:62.00px;height:62.00px;"><span style="transform:translateX(0px) scaleX(0.97);">5</span></div>
<div class="badge" style="left:831.10px;top:300.50px;width:62.00px;height:62.00px;"><span style="transform:translateX(0px) scaleX(0.97);">2</span></div>
<div class="badge" style="left:732.20px;top:444.40px;width:62.00px;height:62.00px;"><span style="transform:translateX(0px) scaleX(0.97);">3</span></div>
<div class="badge" style="left:1376.70px;top:242.60px;width:62.00px;height:62.00px;"><span style="transform:translateX(0px) scaleX(0.97);">4</span></div>
<div class="badge" style="left:1507.00px;top:487.30px;width:62.00px;height:62.00px;"><span style="transform:translateX(0px) scaleX(0.97);">6</span></div>
<div class="badge" style="left:730.90px;top:835.70px;width:62.00px;height:62.00px;"><span style="transform:translateX(0px) scaleX(0.97);">7</span></div>
</div></body></html>
